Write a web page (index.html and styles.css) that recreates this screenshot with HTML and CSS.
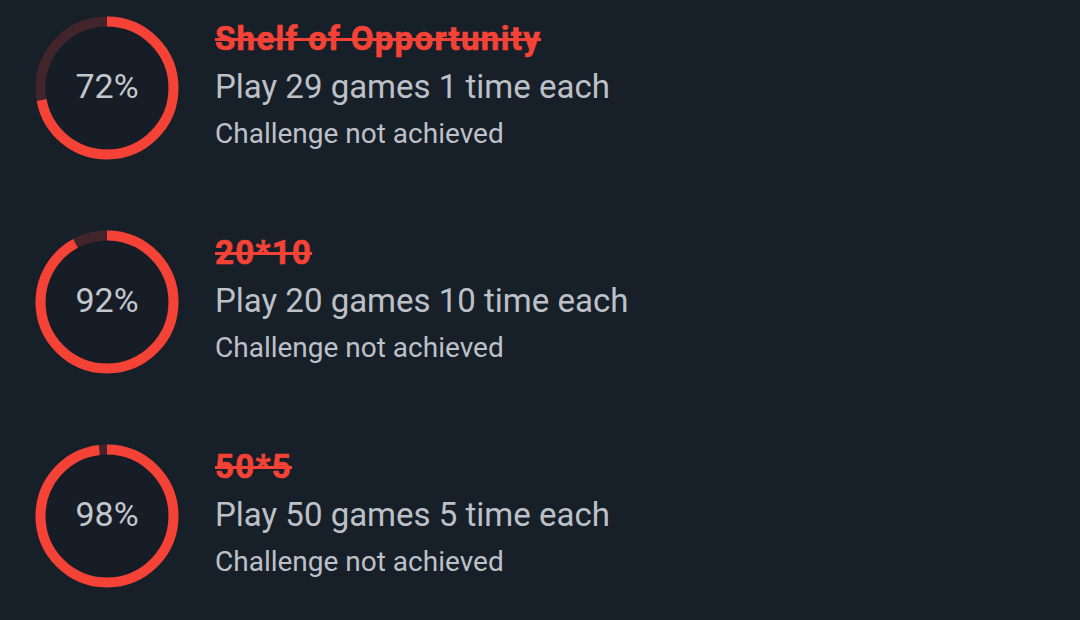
FILE: index.html
```html
<!DOCTYPE html>
<html>
<head>
<meta charset="utf-8">
<link rel="stylesheet" href="styles.css">
</head>
<body>
<div class="list">
  <div class="row">
    <div class="ring">
      <svg width="144" height="144" viewBox="0 0 144 144">
        <circle class="track" cx="72" cy="72" r="66.5"/>
        <circle class="bar" cx="72" cy="72" r="66.5" style="stroke-dasharray: 300.8 417.8"/>
      </svg>
      <span class="pct">72%</span>
    </div>
    <div class="info">
      <div class="title">Shelf of Opportunity</div>
      <div class="desc">Play 29 games 1 time each</div>
      <div class="status">Challenge not achieved</div>
    </div>
  </div>
  <div class="row">
    <div class="ring">
      <svg width="144" height="144" viewBox="0 0 144 144">
        <circle class="track" cx="72" cy="72" r="66.5"/>
        <circle class="bar" cx="72" cy="72" r="66.5" style="stroke-dasharray: 384.4 417.8"/>
      </svg>
      <span class="pct">92%</span>
    </div>
    <div class="info">
      <div class="title">20*10</div>
      <div class="desc">Play 20 games 10 time each</div>
      <div class="status">Challenge not achieved</div>
    </div>
  </div>
  <div class="row">
    <div class="ring">
      <svg width="144" height="144" viewBox="0 0 144 144">
        <circle class="track" cx="72" cy="72" r="66.5"/>
        <circle class="bar" cx="72" cy="72" r="66.5" style="stroke-dasharray: 409.4 417.8"/>
      </svg>
      <span class="pct">98%</span>
    </div>
    <div class="info">
      <div class="title">50*5</div>
      <div class="desc">Play 50 games 5 time each</div>
      <div class="status">Challenge not achieved</div>
    </div>
  </div>
</div>
</body>
</html>
```
FILE: styles.css
```css
html, body {
  margin: 0;
  padding: 0;
  background: #171f29;
  font-family: Roboto, "Liberation Sans", sans-serif;
  width: 1080px;
  height: 620px;
  overflow: hidden;
}
.list {
  display: flex;
  flex-direction: column;
  gap: 70px;
  padding: 16px 0 0 35px;
}
.row {
  display: flex;
  align-items: flex-start;
  gap: 36px;
  height: 144px;
}
.ring {
  position: relative;
  width: 144px;
  height: 144px;
  flex: none;
}
.ring svg {
  display: block;
  transform: rotate(-90deg);
}
.track {
  fill: #161d26;
  stroke: #42252b;
  stroke-width: 10;
}
.bar {
  fill: none;
  stroke: #f44336;
  stroke-width: 10;
}
.pct {
  position: absolute;
  inset: 0;
  display: flex;
  align-items: center;
  justify-content: center;
  padding-bottom: 4px;
  font-size: 34px;
  color: #c3c7cc;
}
.info {
  display: flex;
  flex-direction: column;
  padding-top: 5px;
}
.title {
  font-size: 33px;
  line-height: 36px;
  font-weight: 700;
  letter-spacing: 1.3px;
  -webkit-text-stroke: 0.6px #f44336;
  color: #f44336;
  text-decoration: line-through;
  text-decoration-thickness: 2.5px;
}
.desc {
  font-size: 33px;
  line-height: 40px;
  margin-top: 10px;
  color: #bdc1c7;
}
.status {
  font-size: 28px;
  line-height: 34px;
  margin-top: 10px;
  color: #bdc1c7;
}
```
